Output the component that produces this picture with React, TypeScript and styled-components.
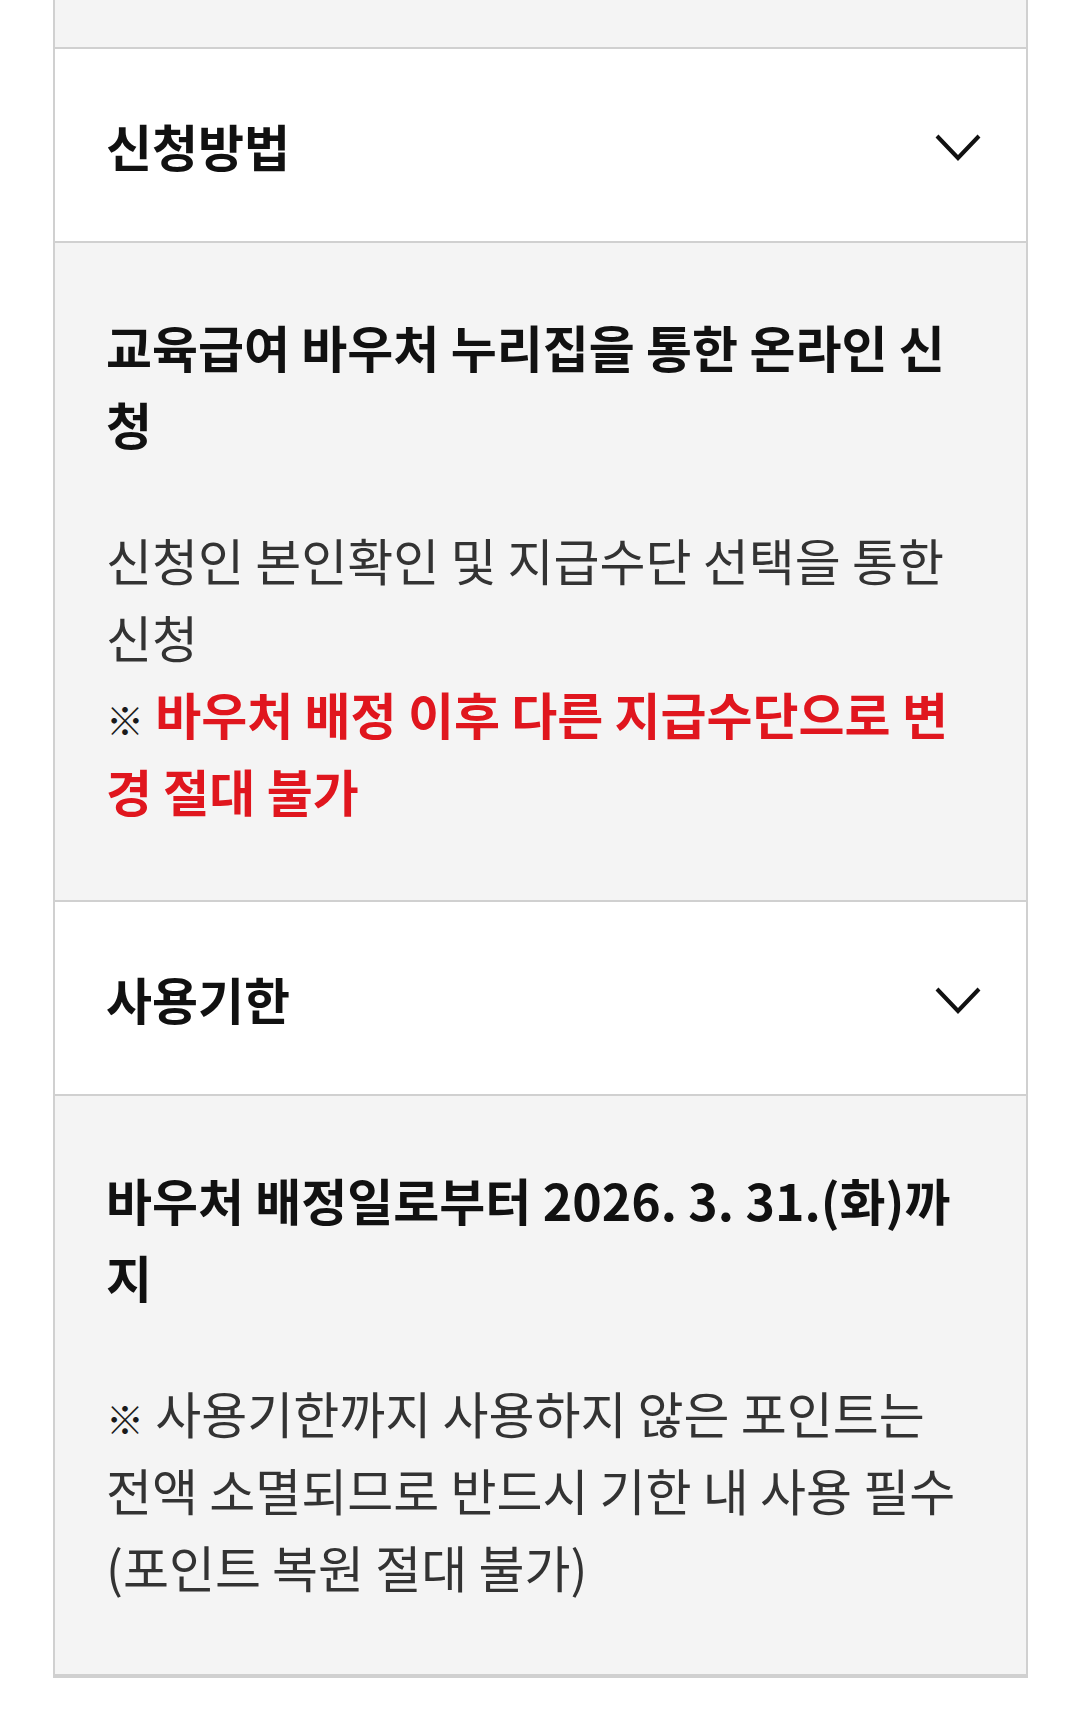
import styled, { createGlobalStyle } from "styled-components";

const GlobalStyle = createGlobalStyle`
	html, body {
		margin: 0;
		padding: 0;
		background: #ffffff;
	}
	body {
		font-family: "Noto Sans CJK KR", "Noto Sans", sans-serif;
		-webkit-font-smoothing: antialiased;
	}
`;

const Page = styled.div`
	padding: 0 52px 50px 53px;
`;

const Card = styled.div`
	width: 975px;
	box-sizing: border-box;
	border: 2px solid #d0d0d0;
	border-top: none;
`;

// tail of the section above, cut off at the top
const Stub = styled.div`
	height: 47px;
	background: #f4f4f4;
	border-bottom: 2px solid #d0d0d0;
`;

const Header = styled.div`
	display: flex;
	align-items: center;
	justify-content: space-between;
	height: 192px;
	padding: 0 45px 0 51px;
	background: #ffffff;
	border-bottom: 2px solid #d0d0d0;
`;

const HeaderTitle = styled.h3`
	margin: 0;
	font-size: 50px;
	font-weight: 700;
	color: #111111;
	line-height: 1;
`;

const Chevron = styled.svg`
	display: block;
	margin-top: 6px;
`;

const Panel = styled.div<{ last?: boolean }>`
	padding: 65px 51px ${(p) => (p.last ? "69px" : "71px")} 51px;
	background: #f4f4f4;
	border-bottom: 2px solid #d0d0d0;
`;

const PanelTitle = styled.p`
	margin: 0 0 59px;
	font-size: 50px;
	font-weight: 700;
	line-height: 77px;
	color: #111111;
`;

const Body = styled.p`
	margin: 0;
	font-size: 50px;
	font-weight: 400;
	line-height: 77px;
	color: #333333;
`;

// reference mark, drawn a little smaller than the text around it
const Mark = styled.span`
	font-size: 38px;
	font-weight: 900;
	line-height: 1;
	color: #1a1a1a;
`;

const Warning = styled.strong`
	font-weight: 700;
	color: #e0161e;
`;

function ChevronDown() {
	return (
		<Chevron width="46" height="28" viewBox="0 0 46 28" fill="none">
			<polyline
				points="2,2 23,24 44,2"
				stroke="#111111"
				strokeWidth="4"
				strokeLinecap="butt"
				strokeLinejoin="miter"
			/>
		</Chevron>
	);
}

export default function App() {
	return (
		<>
			<GlobalStyle />
			<Page>
				<Card>
					<Stub />

					<Header>
						<HeaderTitle>신청방법</HeaderTitle>
						<ChevronDown />
					</Header>
					<Panel>
						<PanelTitle>교육급여 바우처 누리집을 통한 온라인 신청</PanelTitle>
						<Body>
							신청인 본인확인 및 지급수단 선택을 통한 신청
							<br />
							<Mark>※</Mark>{" "}
							<Warning>바우처 배정 이후 다른 지급수단으로 변경 절대 불가</Warning>
						</Body>
					</Panel>

					<Header>
						<HeaderTitle>사용기한</HeaderTitle>
						<ChevronDown />
					</Header>
					<Panel last>
						<PanelTitle>바우처 배정일로부터 2026. 3. 31.(화)까지</PanelTitle>
						<Body>
							<Mark>※</Mark> 사용기한까지 사용하지 않은 포인트는 전액 소멸되므로 반드시
							기한 내 사용 필수 (포인트 복원 절대 불가)
						</Body>
					</Panel>
				</Card>
			</Page>
		</>
	);
}
